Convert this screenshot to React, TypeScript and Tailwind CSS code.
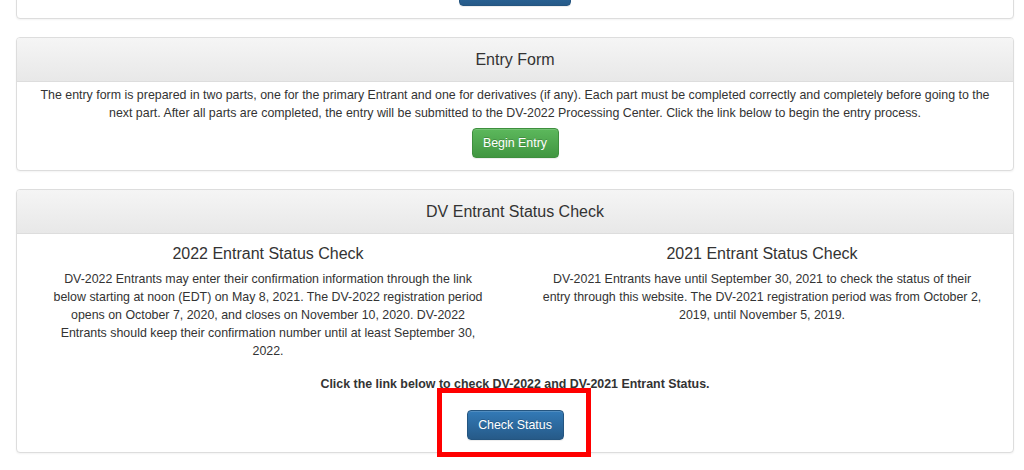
import React from "react";

const blueBtn =
  "rounded-[4px] border border-[#245580] bg-[linear-gradient(#337ab7,#265a88)] text-white shadow-[inset_0_1px_0_rgba(255,255,255,0.15),0_1px_1px_rgba(0,0,0,0.075)] [text-shadow:0_-1px_0_rgba(0,0,0,0.2)]";
const greenBtn =
  "rounded-[4px] border border-[#3e8f3e] bg-[linear-gradient(#5cb85c,#419641)] text-white shadow-[inset_0_1px_0_rgba(255,255,255,0.15),0_1px_1px_rgba(0,0,0,0.075)] [text-shadow:0_-1px_0_rgba(0,0,0,0.2)]";

const panel =
  "rounded-[4px] border border-[#dddddd] bg-white shadow-[0_1px_2px_rgba(0,0,0,0.05)]";
const heading =
  "h-[44px] border-b border-[#dddddd] rounded-t-[3px] bg-[linear-gradient(#f5f5f5,#e8e8e8)] flex items-center justify-center text-[16px] text-[#333]";

export default function App() {
  return (
    <div className="min-h-[470px] h-[470px] overflow-hidden bg-white pl-4 pr-[10px] flex flex-col font-['Liberation_Sans',Arial,sans-serif] text-[12.4px] leading-[18px] text-[#333]">
      {/* top (cut off) panel */}
      <div className={`${panel} -mt-[25px] pb-[12px] flex justify-center`}>
        <div className={`${blueBtn} w-[112px] h-[30px]`} />
      </div>

      {/* Entry Form */}
      <div className={`${panel} mt-[18px]`}>
        <div className={heading}>Entry Form</div>
        <div className="px-[15px] pt-[4px] pb-[12px] flex flex-col items-center text-center">
          <p>
            The entry form is prepared in two parts, one for the primary Entrant and one for derivatives (if any). Each part must be completed correctly and completely before going to the next part. After all parts are completed, the entry will be submitted to the DV-2022 Processing Center. Click the link below to begin the entry process.
          </p>
          <button className={`${greenBtn} mt-[6px] w-[87px] h-[30px] text-[12.4px]`}>Begin Entry</button>
        </div>
      </div>

      {/* DV Entrant Status Check */}
      <div className={`${panel} mt-[18px]`}>
        <div className={heading}>DV Entrant Status Check</div>
        <div className="px-[31px] pt-[10px] pb-[12px] flex flex-col items-center text-center">
          <div className="grid grid-cols-2 gap-x-[54px] w-full">
            <div className="flex flex-col items-center">
              <h3 className="text-[16px] leading-[20px]">2022 Entrant Status Check</h3>
              <p className="mt-[6px]">
                DV-2022 Entrants may enter their confirmation information through the link below starting at noon (EDT) on May 8, 2021. The DV-2022 registration period opens on October 7, 2020, and closes on November 10, 2020. DV-2022 Entrants should keep their confirmation number until at least September 30, 2022.
              </p>
            </div>
            <div className="flex flex-col items-center">
              <h3 className="text-[16px] leading-[20px]">2021 Entrant Status Check</h3>
              <p className="mt-[6px]">
                DV-2021 Entrants have until September 30, 2021 to check the status of their entry through this website. The DV-2021 registration period was from October 2, 2019, until November 5, 2019.
              </p>
            </div>
          </div>
          <p className="mt-[15px] font-bold">Click the link below to check DV-2022 and DV-2021 Entrant Status.</p>
          <div className="relative mt-[17px]">
            <button className={`${blueBtn} w-[97px] h-[30px] text-[12.4px]`}>Check Status</button>
            <div className="absolute left-[-30px] top-[-22px] w-[154px] h-[69px] border-[5px] border-[#ff0000] pointer-events-none" />
          </div>
        </div>
      </div>
    </div>
  );
}
